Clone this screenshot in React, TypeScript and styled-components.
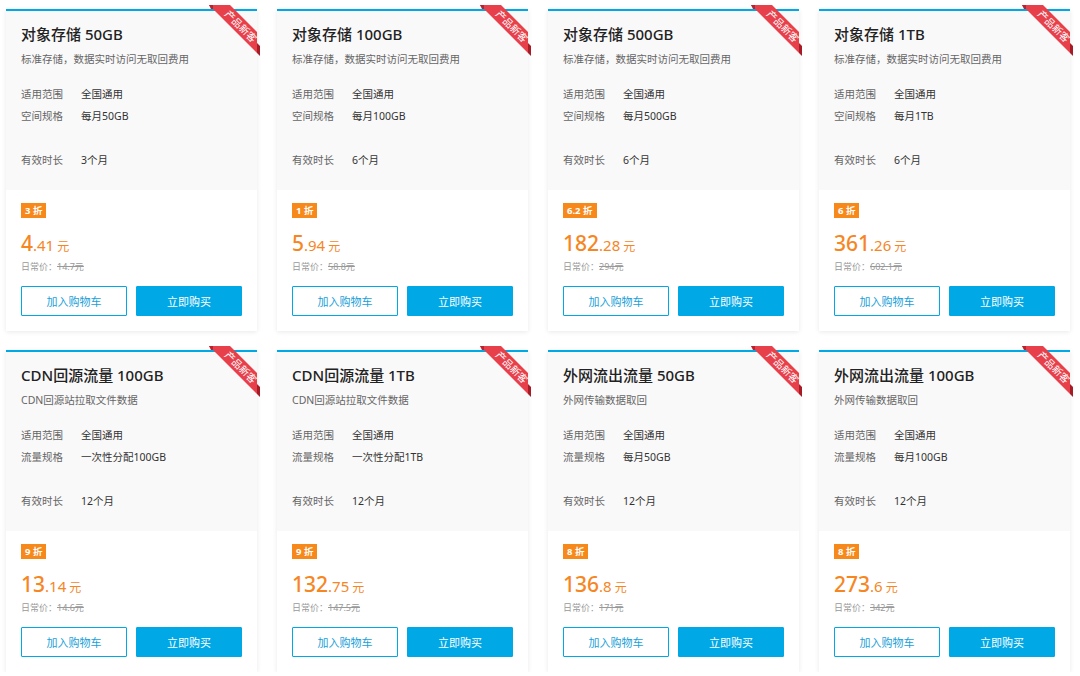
import React from "react";
import styled, { createGlobalStyle } from "styled-components";

const GlobalStyle = createGlobalStyle`
  html, body { margin: 0; padding: 0; background: #fff; }
  body { font-family: "Noto Sans", "Noto Sans CJK SC", sans-serif; color: #333; }
  * { box-sizing: border-box; }
`;

const Page = styled.div`
  padding: 9px 0 0 6px;
  display: grid;
  grid-template-columns: repeat(4, 251px);
  column-gap: 20px;
  row-gap: 19px;
`;

const Card = styled.div`
  position: relative;
  height: 322px;
  background: #fff;
  border-top: 2px solid #00a8e6;
  box-shadow: 0 1px 5px rgba(0, 0, 0, 0.09);
  display: flex;
  flex-direction: column;
`;

const Top = styled.div`
  background: #f9f9f9;
  padding: 12px 15px 19px;
  height: 179px;
`;

const Title = styled.div`
  font-size: 15px;
  line-height: 22px;
  font-weight: 500;
  color: #222;
  white-space: nowrap;
`;

const Desc = styled.div`
  margin-top: 5px;
  font-size: 10.5px;
  line-height: 18px;
  color: #666;
  margin-bottom: 15px;
`;

const Row = styled.div<{ $gap?: boolean }>`
  display: flex;
  font-size: 10.5px;
  line-height: 22px;
  margin-top: ${(p) => (p.$gap ? "22px" : "0")};
`;

const Label = styled.span`
  width: 60px;
  color: #666;
`;

const Value = styled.span`
  color: #333;
`;

const Bottom = styled.div`
  padding: 13px 15px 15px;
  display: flex;
  flex-direction: column;
`;

const Tag = styled.span`
  align-self: flex-start;
  background: #f7891b;
  color: #fff;
  font-size: 9.5px;
  font-weight: 700;
  height: 15px;
  line-height: 15px;
  padding: 0 4px;
`;

const Price = styled.div`
  margin-top: 13px;
  color: #f6861f;
  height: 24px;
  line-height: 24px;
  white-space: nowrap;
`;

const Big = styled.span`
  font-size: 21px;
  font-weight: 500;
`;

const Dec = styled.span`
  font-size: 15px;
`;

const Unit = styled.span`
  font-size: 12px;
  margin-left: 3px;
`;

const Regular = styled.div`
  margin-top: 5px;
  font-size: 9px;
  line-height: 14px;
  color: #999;
`;

const Strike = styled.span`
  text-decoration: line-through;
`;

const Buttons = styled.div`
  margin-top: 12px;
  display: grid;
  grid-template-columns: 1fr 1fr;
  column-gap: 9px;
`;

const Btn = styled.button<{ $primary?: boolean }>`
  height: 30px;
  font-family: inherit;
  font-size: 11px;
  border: 1px solid #00a8e6;
  border-radius: 1px;
  background: ${(p) => (p.$primary ? "#00a8e6" : "#fff")};
  color: ${(p) => (p.$primary ? "#fff" : "#1a9fd9")};
  padding: 0;
  cursor: pointer;
`;

const Ribbon = styled.div`
  position: absolute;
  top: -6px;
  right: -3px;
  width: 54px;
  height: 54px;
  pointer-events: none;
`;

const RibbonSvg = styled.svg`
  position: absolute;
  left: 0;
  top: 0;
`;

const RibbonText = styled.span`
  position: absolute;
  left: 35px;
  top: 21px;
  transform: translate(-50%, -50%) rotate(45deg);
  font-size: 10px;
  line-height: 12px;
  color: #fff;
  white-space: nowrap;
`;

type Item = {
  name: string;
  desc: string;
  specLabel: string;
  spec: string;
  period: string;
  discount: string;
  int: string;
  dec: string;
  regular: string;
};

const items: Item[] = [
  { name: "对象存储 50GB", desc: "标准存储，数据实时访问无取回费用", specLabel: "空间规格", spec: "每月50GB", period: "3个月", discount: "3 折", int: "4", dec: ".41", regular: "14.7元" },
  { name: "对象存储 100GB", desc: "标准存储，数据实时访问无取回费用", specLabel: "空间规格", spec: "每月100GB", period: "6个月", discount: "1 折", int: "5", dec: ".94", regular: "58.8元" },
  { name: "对象存储 500GB", desc: "标准存储，数据实时访问无取回费用", specLabel: "空间规格", spec: "每月500GB", period: "6个月", discount: "6.2 折", int: "182", dec: ".28", regular: "294元" },
  { name: "对象存储 1TB", desc: "标准存储，数据实时访问无取回费用", specLabel: "空间规格", spec: "每月1TB", period: "6个月", discount: "6 折", int: "361", dec: ".26", regular: "602.1元" },
  { name: "CDN回源流量 100GB", desc: "CDN回源站拉取文件数据", specLabel: "流量规格", spec: "一次性分配100GB", period: "12个月", discount: "9 折", int: "13", dec: ".14", regular: "14.6元" },
  { name: "CDN回源流量 1TB", desc: "CDN回源站拉取文件数据", specLabel: "流量规格", spec: "一次性分配1TB", period: "12个月", discount: "9 折", int: "132", dec: ".75", regular: "147.5元" },
  { name: "外网流出流量 50GB", desc: "外网传输数据取回", specLabel: "流量规格", spec: "每月50GB", period: "12个月", discount: "8 折", int: "136", dec: ".8", regular: "171元" },
  { name: "外网流出流量 100GB", desc: "外网传输数据取回", specLabel: "流量规格", spec: "每月100GB", period: "12个月", discount: "8 折", int: "273", dec: ".6", regular: "342元" },
];

const NewRibbon = () => (
  <Ribbon>
    <RibbonSvg width="54" height="54" viewBox="0 0 54 54">
      <polygon points="51,38 54,41 54,51 51,48" fill="#a51c26" />
      <polygon points="3,0 24,0 51,27 51,48" fill="#e8404b" />
      <polygon points="3,0 7,0 7,4 5,4" fill="#b8232d" />
    </RibbonSvg>
    <RibbonText>产品新客</RibbonText>
  </Ribbon>
);

export default function App() {
  return (
    <>
      <GlobalStyle />
      <Page>
        {items.map((it) => (
          <Card key={it.name}>
            <NewRibbon />
            <Top>
              <Title>{it.name}</Title>
              <Desc>{it.desc}</Desc>
              <Row>
                <Label>适用范围</Label>
                <Value>全国通用</Value>
              </Row>
              <Row>
                <Label>{it.specLabel}</Label>
                <Value>{it.spec}</Value>
              </Row>
              <Row $gap>
                <Label>有效时长</Label>
                <Value>{it.period}</Value>
              </Row>
            </Top>
            <Bottom>
              <Tag>{it.discount}</Tag>
              <Price>
                <Big>{it.int}</Big>
                <Dec>{it.dec}</Dec>
                <Unit>元</Unit>
              </Price>
              <Regular>
                日常价：<Strike>{it.regular}</Strike>
              </Regular>
              <Buttons>
                <Btn>加入购物车</Btn>
                <Btn $primary>立即购买</Btn>
              </Buttons>
            </Bottom>
          </Card>
        ))}
      </Page>
    </>
  );
}
